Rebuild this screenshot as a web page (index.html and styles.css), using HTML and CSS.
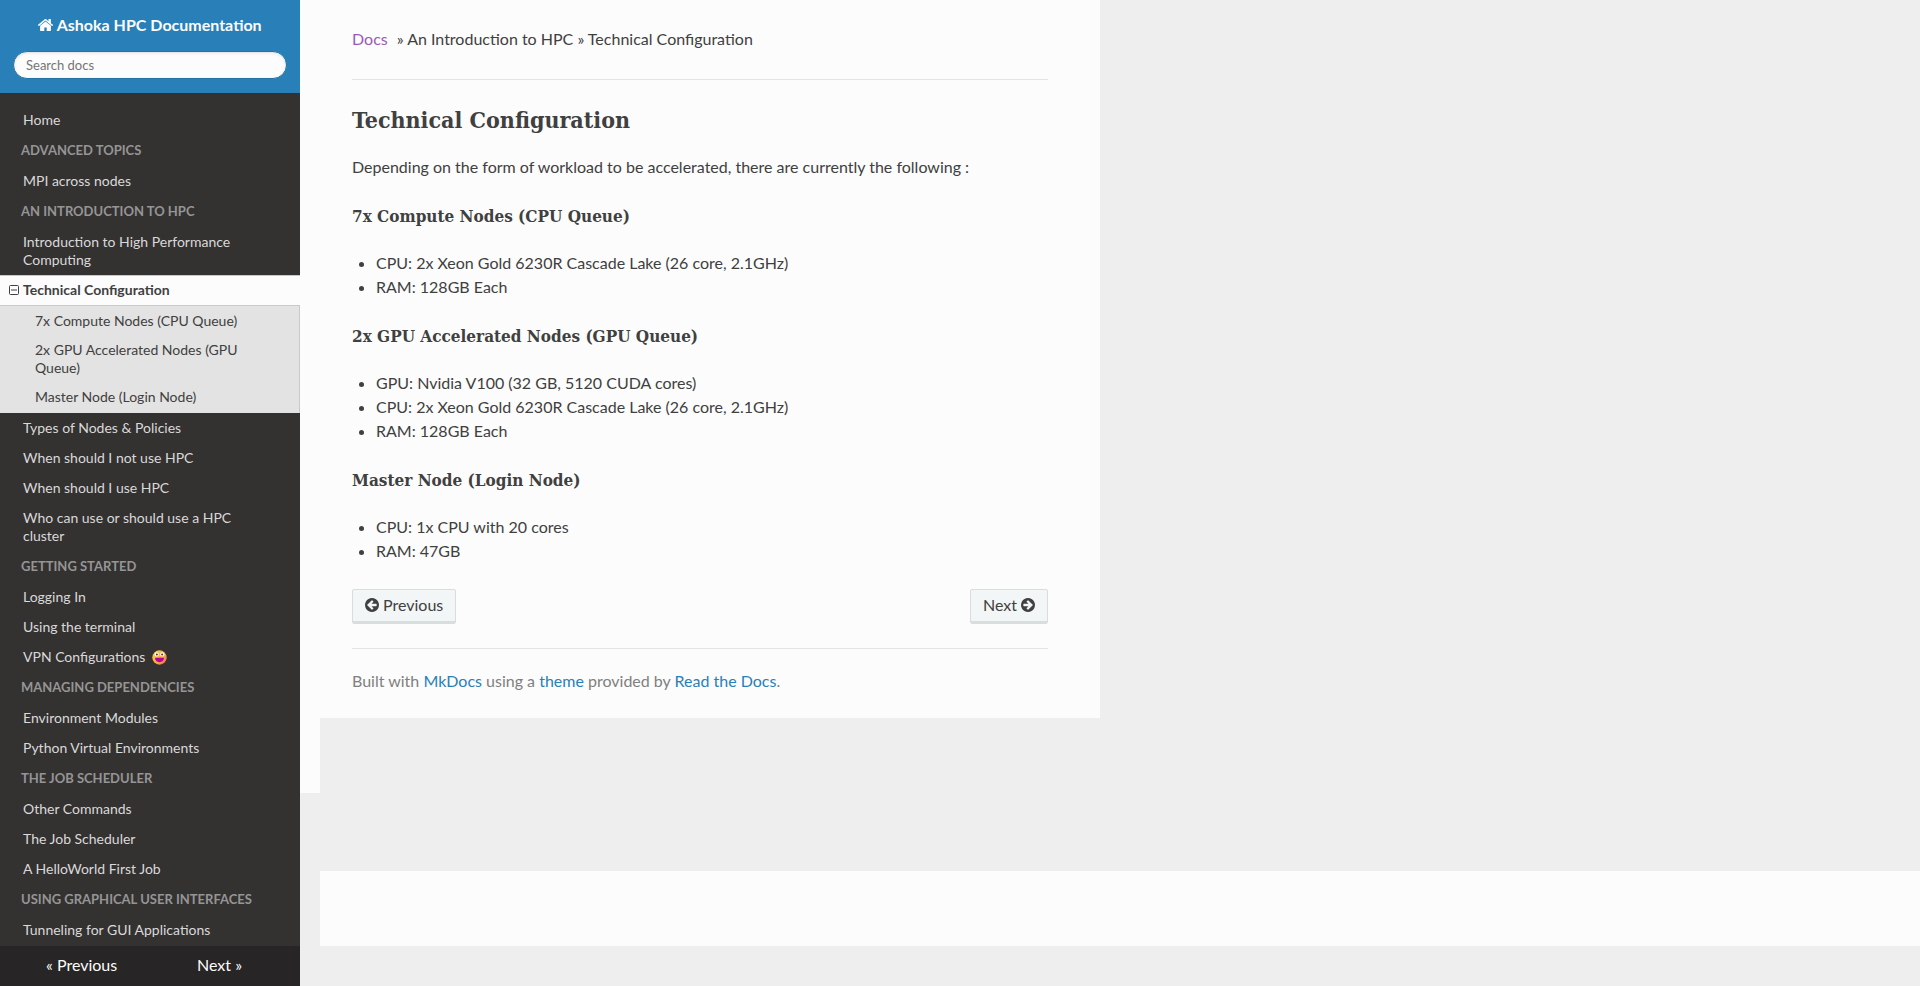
FILE: index.html
```html
<!DOCTYPE html>
<html lang="en">
<head>
<meta charset="utf-8">
<meta name="viewport" content="width=device-width, initial-scale=1">
<title>Technical Configuration - Ashoka HPC Documentation</title>
<link rel="stylesheet" href="styles.css">
</head>
<body>
<div class="page">
  <nav class="side" aria-label="Documentation">
    <div class="side-head">
      <a class="brand" href="#"><svg class="home-icon" viewBox="96 256 1600 1280" aria-hidden="true"><path d="M1472 992v480q0 26-19 45t-45 19h-384v-384h-256v384h-384q-26 0-45-19t-19-45v-480q0-1 .5-3t.5-3l575-474 575 474q1 2 1 6zm223-69l-62 74q-8 9-21 11h-3q-13 0-21-7l-692-577-692 577q-12 8-24 7-13-2-21-11l-62-74q-8-10-7-23.5t11-21.5l719-599q32-26 76-26t76 26l244 204v-195q0-14 9-23t23-9h192q14 0 23 9t9 23v408l219 182q10 8 11 21.5t-7 23.5z"/></svg> Ashoka HPC Documentation</a>
      <form class="search"><input type="text" placeholder="Search docs" aria-label="Search docs"></form>
    </div>
    <div class="menu">
      <ul>
        <li><a href="#">Home</a></li>
      </ul>
      <p class="caption">Advanced Topics</p>
      <ul>
        <li><a href="#">MPI across nodes</a></li>
      </ul>
      <p class="caption">An Introduction to HPC</p>
      <ul>
        <li><a href="#">Introduction to High Performance Computing</a></li>
        <li class="current">
          <a href="#"><svg class="toggle" viewBox="0 0 10 10" aria-hidden="true"><rect x=".5" y=".5" width="9" height="9" rx="1"/><path d="M2 5h6"/></svg>Technical Configuration</a>
          <ul class="sub">
            <li><a href="#compute">7x Compute Nodes (CPU Queue)</a></li>
            <li><a href="#gpu">2x GPU Accelerated Nodes (GPU Queue)</a></li>
            <li><a href="#master">Master Node (Login Node)</a></li>
          </ul>
        </li>
        <li><a href="#">Types of Nodes &amp; Policies</a></li>
        <li><a href="#">When should I not use HPC</a></li>
        <li><a href="#">When should I use HPC</a></li>
        <li><a href="#">Who can use or should use a HPC cluster</a></li>
      </ul>
      <p class="caption">Getting Started</p>
      <ul>
        <li><a href="#">Logging In</a></li>
        <li><a href="#">Using the terminal</a></li>
        <li><a href="#">VPN Configurations <svg class="emoji" viewBox="0 0 15 15" role="img" aria-label="grinning face"><defs><linearGradient id="face" x1="0" y1="0" x2="1" y2="1"><stop offset="0" stop-color="#ffd04a"/><stop offset=".6" stop-color="#fba83c"/><stop offset="1" stop-color="#ee5b6c"/></linearGradient></defs><circle cx="7.5" cy="7.5" r="7.2" fill="url(#face)"/><circle cx="4.7" cy="4.4" r="2.1" fill="#fff"/><circle cx="10.3" cy="4.4" r="2.1" fill="#fff"/><circle cx="4.9" cy="4.5" r="1" fill="#553430"/><circle cx="10.1" cy="4.5" r="1" fill="#553430"/><path d="M3 7.8h9c0 2.600-1.800 4.400-4.500 4.400s-4.500-1.800-4.500-4.400z" fill="#b4009e"/></svg></a></li>
      </ul>
      <p class="caption">Managing Dependencies</p>
      <ul>
        <li><a href="#">Environment Modules</a></li>
        <li><a href="#">Python Virtual Environments</a></li>
      </ul>
      <p class="caption">The Job Scheduler</p>
      <ul>
        <li><a href="#">Other Commands</a></li>
        <li><a href="#">The Job Scheduler</a></li>
        <li><a href="#">A HelloWorld First Job</a></li>
      </ul>
      <p class="caption">Using Graphical User Interfaces</p>
      <ul>
        <li><a href="#">Tunneling for GUI Applications</a></li>
      </ul>
    </div>
    <div class="versions">
      <a href="#">« Previous</a>
      <a href="#">Next »</a>
    </div>
  </nav>

  <div class="main">
    <main class="content">
      <div class="crumbs"><a href="#">Docs</a><span>» An Introduction to HPC » Technical Configuration</span></div>
      <hr>
      <h1>Technical Configuration</h1>
      <p>Depending on the form of workload to be accelerated, there are currently the following :</p>
      <h3 id="compute">7x Compute Nodes (CPU Queue)</h3>
      <ul>
        <li>CPU: 2x Xeon Gold 6230R Cascade Lake (26 core, 2.1GHz)</li>
        <li>RAM: 128GB Each</li>
      </ul>
      <h3 id="gpu">2x GPU Accelerated Nodes (GPU Queue)</h3>
      <ul>
        <li>GPU: Nvidia V100 (32 GB, 5120 CUDA cores)</li>
        <li>CPU: 2x Xeon Gold 6230R Cascade Lake (26 core, 2.1GHz)</li>
        <li>RAM: 128GB Each</li>
      </ul>
      <h3 id="master">Master Node (Login Node)</h3>
      <ul>
        <li>CPU: 1x CPU with 20 cores</li>
        <li>RAM: 47GB</li>
      </ul>
      <footer>
        <div class="pager">
          <a class="btn" href="#"><svg viewBox="128 128 1536 1536" aria-hidden="true"><path d="M1408 960v-128q0-26-19-45t-45-19h-502l189-189q19-19 19-45t-19-45l-91-91q-18-18-45-18t-45 18l-362 362-91 91q-18 18-18 45t18 45l91 91 362 362q18 18 45 18t45-18l91-91q18-18 18-45t-18-45l-189-189h502q26 0 45-19t19-45zm256-64q0 209-103 385.5t-279.5 279.5-385.5 103-385.5-103-279.5-279.5-103-385.5 103-385.5 279.5-279.5 385.5-103 385.5 103 279.5 279.5 103 385.5z"/></svg>Previous</a>
          <a class="btn" href="#">Next<svg viewBox="128 128 1536 1536" aria-hidden="true"><path transform="translate(1792 0) scale(-1 1)" d="M1408 960v-128q0-26-19-45t-45-19h-502l189-189q19-19 19-45t-19-45l-91-91q-18-18-45-18t-45 18l-362 362-91 91q-18 18-18 45t18 45l91 91 362 362q18 18 45 18t45-18l91-91q18-18 18-45t-18-45l-189-189h502q26 0 45-19t19-45zm256-64q0 209-103 385.5t-279.5 279.5-385.5 103-385.5-103-279.5-279.5-103-385.5 103-385.5 279.5-279.5 385.5-103 385.5 103 279.5 279.5 103 385.5z"/></svg></a>
        </div>
        <hr>
        <p class="credit">Built with <a href="#">MkDocs</a> using a <a href="#">theme</a> provided by <a href="#">Read the Docs</a>.</p>
      </footer>
    </main>
    <div class="edge"></div>
    <div class="band"></div>
  </div>
</div>
</body>
</html>
```
FILE: styles.css
```css
* { box-sizing: border-box; }

body {
  margin: 0;
  background: #eee;
  color: #404040;
  font: 16px/24px Lato, "Liberation Sans", sans-serif;
}

a { color: #2980b9; text-decoration: none; }
ul { margin: 0; padding: 0; }

.page { display: flex; height: 100vh; }

/* Sidebar */
.side {
  display: flex;
  flex-direction: column;
  flex: 0 0 300px;
  background: #343131;
}

.side-head {
  padding: 13px 13px 14px;
  background: #2980b9;
  text-align: center;
}

.brand {
  display: block;
  margin-bottom: 14px;
  color: #fcfcfc;
  font-weight: 700;
}

.home-icon { width: 15px; height: 12px; fill: #fcfcfc; }

.search input {
  display: block;
  width: 100%;
  height: 28px;
  padding: 0 12px 1px;
  border: 1px solid #2472a4;
  border-radius: 50px;
  background: #fcfcfc;
  box-shadow: inset 0 1px 3px #ddd;
  color: #404040;
  font: 13px Lato, sans-serif;
}

.search input::placeholder { color: #757575; }

.menu {
  flex: 1;
  min-height: 0;
  padding-top: 12px;
  overflow: hidden;
}

.menu ul { list-style: none; }

.menu a {
  display: block;
  padding: 6px 56px 6px 23px;
  color: #d9d9d9;
  font-size: 14px;
  line-height: 18px;
}

.caption {
  margin: 0;
  padding: 0 21px;
  color: #959595;
  font-size: 13px;
  font-weight: 700;
  line-height: 31px;
  text-transform: uppercase;
}

.menu .current > a {
  display: flex;
  align-items: center;
  gap: 4px;
  padding: 5px 9px 6px;
  border-top: 1px solid #c9c9c9;
  border-bottom: 1px solid #c9c9c9;
  background: #fcfcfc;
  color: #404040;
  font-weight: 700;
}

.toggle { width: 10px; height: 10px; fill: none; stroke: #404040; }

.menu .sub {
  padding-bottom: 2px;
  border-right: 1px solid #c9c9c9;
  background: #e3e3e3;
}

.menu .sub a { padding: 6px 50px 5px 35px; color: #404040; }

.emoji { width: 15px; height: 15px; margin-left: 3px; vertical-align: -3px; }

.versions {
  display: flex;
  justify-content: space-between;
  padding: 7px 58px 9px 46px;
  background: #272525;
}

.versions a { color: #fcfcfc; }

/* Content */
.main { flex: 1; min-width: 0; }

.content {
  max-width: 800px;
  padding: 26px 52px 25px;
  background: #fcfcfc;
}

.crumbs { display: flex; gap: 9px; padding: 1px 0 4px; }
.crumbs a { color: #9b59b6; }

hr { margin: 24px 0; border: 0; border-top: 1px solid #e1e4e5; }

h1, h3 {
  margin: 0;
  font-family: "Roboto Slab", "DejaVu Serif Condensed", "DejaVu Serif", serif;
  font-weight: 700;
}

h1 { margin-bottom: 19px; font-size: 23px; line-height: 32px; }
h3 { margin-bottom: 22px; font-size: 17px; line-height: 26px; }

.content p { margin: 0 0 24px; }
.content ul { margin-bottom: 24px; padding-left: 24px; }

.pager { display: flex; justify-content: space-between; padding-top: 2px; }

.btn {
  display: flex;
  align-items: center;
  gap: 4px;
  padding: 3px 12px 6px;
  border: 1px solid #dadddd;
  border-radius: 2px;
  background: #f3f6f6;
  box-shadow: inset 0 -2px 0 #d8dddd;
  color: #404040;
}

.btn svg { width: 14px; height: 14px; fill: #404040; }

footer hr { margin-bottom: 20px; }
.content .credit { margin: 0; color: #808080; }

/* Page background bands below the content */
.edge { width: 20px; height: 75px; background: #fcfcfc; }
.band { height: 75px; margin: 78px 0 0 20px; background: #fcfcfc; }
```
